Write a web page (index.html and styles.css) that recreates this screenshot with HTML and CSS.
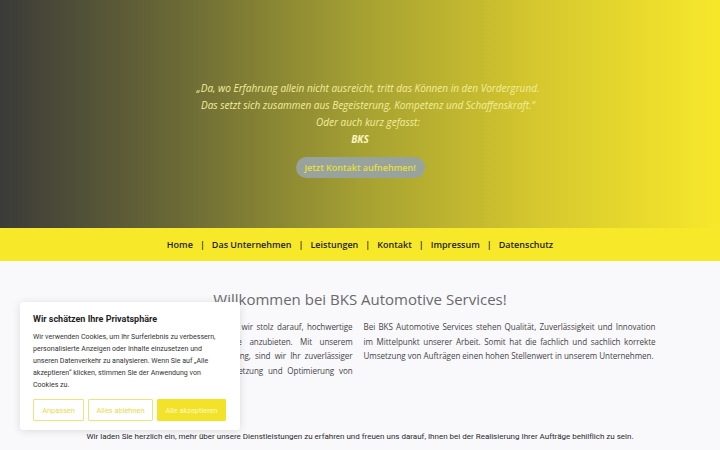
FILE: index.html
```html
<!DOCTYPE html>
<html lang="de">
<head>
<meta charset="utf-8">
<link rel="stylesheet" href="styles.css">
</head>
<body>
<header class="hero">
  <p class="quote">„Da, wo Erfahrung allein nicht ausreicht, tritt das Können in den Vordergrund.<br>Das setzt sich zusammen aus Begeisterung, Kompetenz und Schaffenskraft.“<br>Oder auch kurz gefasst:</p>
  <p class="brand">BKS</p>
  <a class="cta">Jetzt Kontakt aufnehmen!</a>
</header>
<nav class="nav">
  <a>Home</a><span class="sep">|</span>
  <a>Das Unternehmen</a><span class="sep">|</span>
  <a>Leistungen</a><span class="sep">|</span>
  <a>Kontakt</a><span class="sep">|</span>
  <a>Impressum</a><span class="sep">|</span>
  <a>Datenschutz</a>
</nav>
<main class="main">
  <h1 class="title">Willkommen bei BKS Automotive Services!</h1>
  <div class="cols">
    <p class="col">Als Ihr Partner in der Automobilbranche sind wir stolz darauf, hochwertige Dienstleistungen für die Automobilindustrie anzubieten. Mit unserem Fachwissen und unserer langjährigen Erfahrung, sind wir Ihr zuverlässiger Partner, wenn es um die Entwicklung, Umsetzung und Optimierung von Prozessen geht.</p>
    <p class="col col-r">Bei BKS Automotive Services stehen Qualität, Zuverlässigkeit und Innovation im Mittelpunkt unserer Arbeit. Somit hat die fachlich und sachlich korrekte Umsetzung von Aufträgen einen hohen Stellenwert in unserem Unternehmen.</p>
  </div>
  <p class="invite">Wir laden Sie herzlich ein, mehr über unsere Dienstleistungen zu erfahren und freuen uns darauf, Ihnen bei der Realisierung Ihrer Aufträge behilflich zu sein.</p>
</main>
<div class="cookie">
  <h2 class="cookie-title">Wir schätzen Ihre Privatsphäre</h2>
  <p class="cookie-text">Wir verwenden Cookies, um Ihr Surferlebnis zu verbessern, personalisierte Anzeigen oder Inhalte einzusetzen und unseren Datenverkehr zu analysieren. Wenn Sie auf „Alle akzeptieren“ klicken, stimmen Sie der Anwendung von Cookies zu.</p>
  <div class="cookie-btns">
    <button class="btn btn-outline btn-a">Anpassen</button>
    <button class="btn btn-outline btn-b">Alles ablehnen</button>
    <button class="btn btn-fill">Alle akzeptieren</button>
  </div>
</div>
</body>
</html>
```
FILE: styles.css
```css
html, body { margin: 0; padding: 0; }
body {
  width: 720px;
  height: 450px;
  overflow: hidden;
  background: #f9f9fc;
  font-family: "Open Sans", "Liberation Sans", sans-serif;
  position: relative;
}
.hero {
  height: 228px;
  box-sizing: border-box;
  padding-top: 80px;
  background: linear-gradient(to right, #3b3b3a 0%, #6b6a36 25%, #a5a032 50%, #d6c82e 75%, #f7e82b 100%);
  display: flex;
  flex-direction: column;
  align-items: center;
}
.quote {
  margin: 0;
  padding-left: 16px;
  font-size: 10px;
  line-height: 17px;
  font-style: italic;
  color: #f3ee9c;
  text-align: center;
}
.brand {
  margin: 0;
  font-size: 10px;
  line-height: 17px;
  font-style: italic;
  font-weight: 700;
  color: #fbf6c0;
}
.cta {
  margin-top: 9px;
  width: 129px;
  height: 21px;
  line-height: 21px;
  border-radius: 11px;
  background: #98a39e;
  color: #e7df3a;
  font-size: 9px;
  font-weight: 600;
  text-align: center;
}
.nav {
  height: 33px;
  background: #f7e829;
  display: flex;
  justify-content: center;
  align-items: center;
  font-size: 9px;
  font-weight: 600;
  color: #1f1f1f;
}
.sep { margin: 0 7px; font-weight: 600; }
.main {
  padding-top: 27px;
}
.title {
  margin: 0;
  text-align: center;
  font-size: 15px;
  line-height: 22px;
  font-weight: 400;
  color: #6a6a6a;
}
.cols {
  display: grid;
  grid-template-columns: 288px 292px;
  column-gap: 11px;
  justify-content: center;
  margin-top: 10px;
}
.col {
  margin: 0;
  font-size: 8.05px;
  letter-spacing: -0.08px;
  line-height: 14.5px;
  text-align: justify;
  color: #444;
}
.col-r { letter-spacing: -0.04px; }
.invite {
  margin: 0;
  position: absolute;
  left: 0;
  right: 0;
  top: 430px;
  text-align: center;
  font-family: Roboto, "Liberation Sans", sans-serif;
  font-size: 8px;
  line-height: 14px;
  color: #2a2a2a;
}
.cookie {
  position: absolute;
  left: 20px;
  top: 302px;
  width: 220px;
  height: 128px;
  box-sizing: border-box;
  padding: 10px 13px;
  background: #fff;
  box-shadow: 0 1px 8px rgba(0,0,0,0.12);
  border-radius: 3px;
  font-family: Roboto, "Liberation Sans", sans-serif;
}
.cookie-title {
  margin: 0;
  font-size: 9px;
  line-height: 14px;
  font-weight: 700;
  color: #1f1f1f;
}
.cookie-text {
  margin: 5px 0 0;
  font-size: 7.05px;
  line-height: 12px;
  color: #333;
}
.cookie-btns {
  display: flex;
  gap: 4px;
  margin-top: 8px;
}
.btn {
  height: 22px;
  box-sizing: border-box;
  font-family: Roboto, "Liberation Sans", sans-serif;
  font-size: 7.4px;
  padding: 0;
  border-radius: 1px;
}
.btn-outline {
  background: #fff;
  border: 1px solid #efe47a;
  color: #e8d94a;
}
.btn-a { width: 51px; }
.btn-b { width: 65px; }
.btn-fill {
  width: 69px;
  background: #f2e32a;
  border: 1px solid #f2e32a;
  color: #fff9c8;
}
```
